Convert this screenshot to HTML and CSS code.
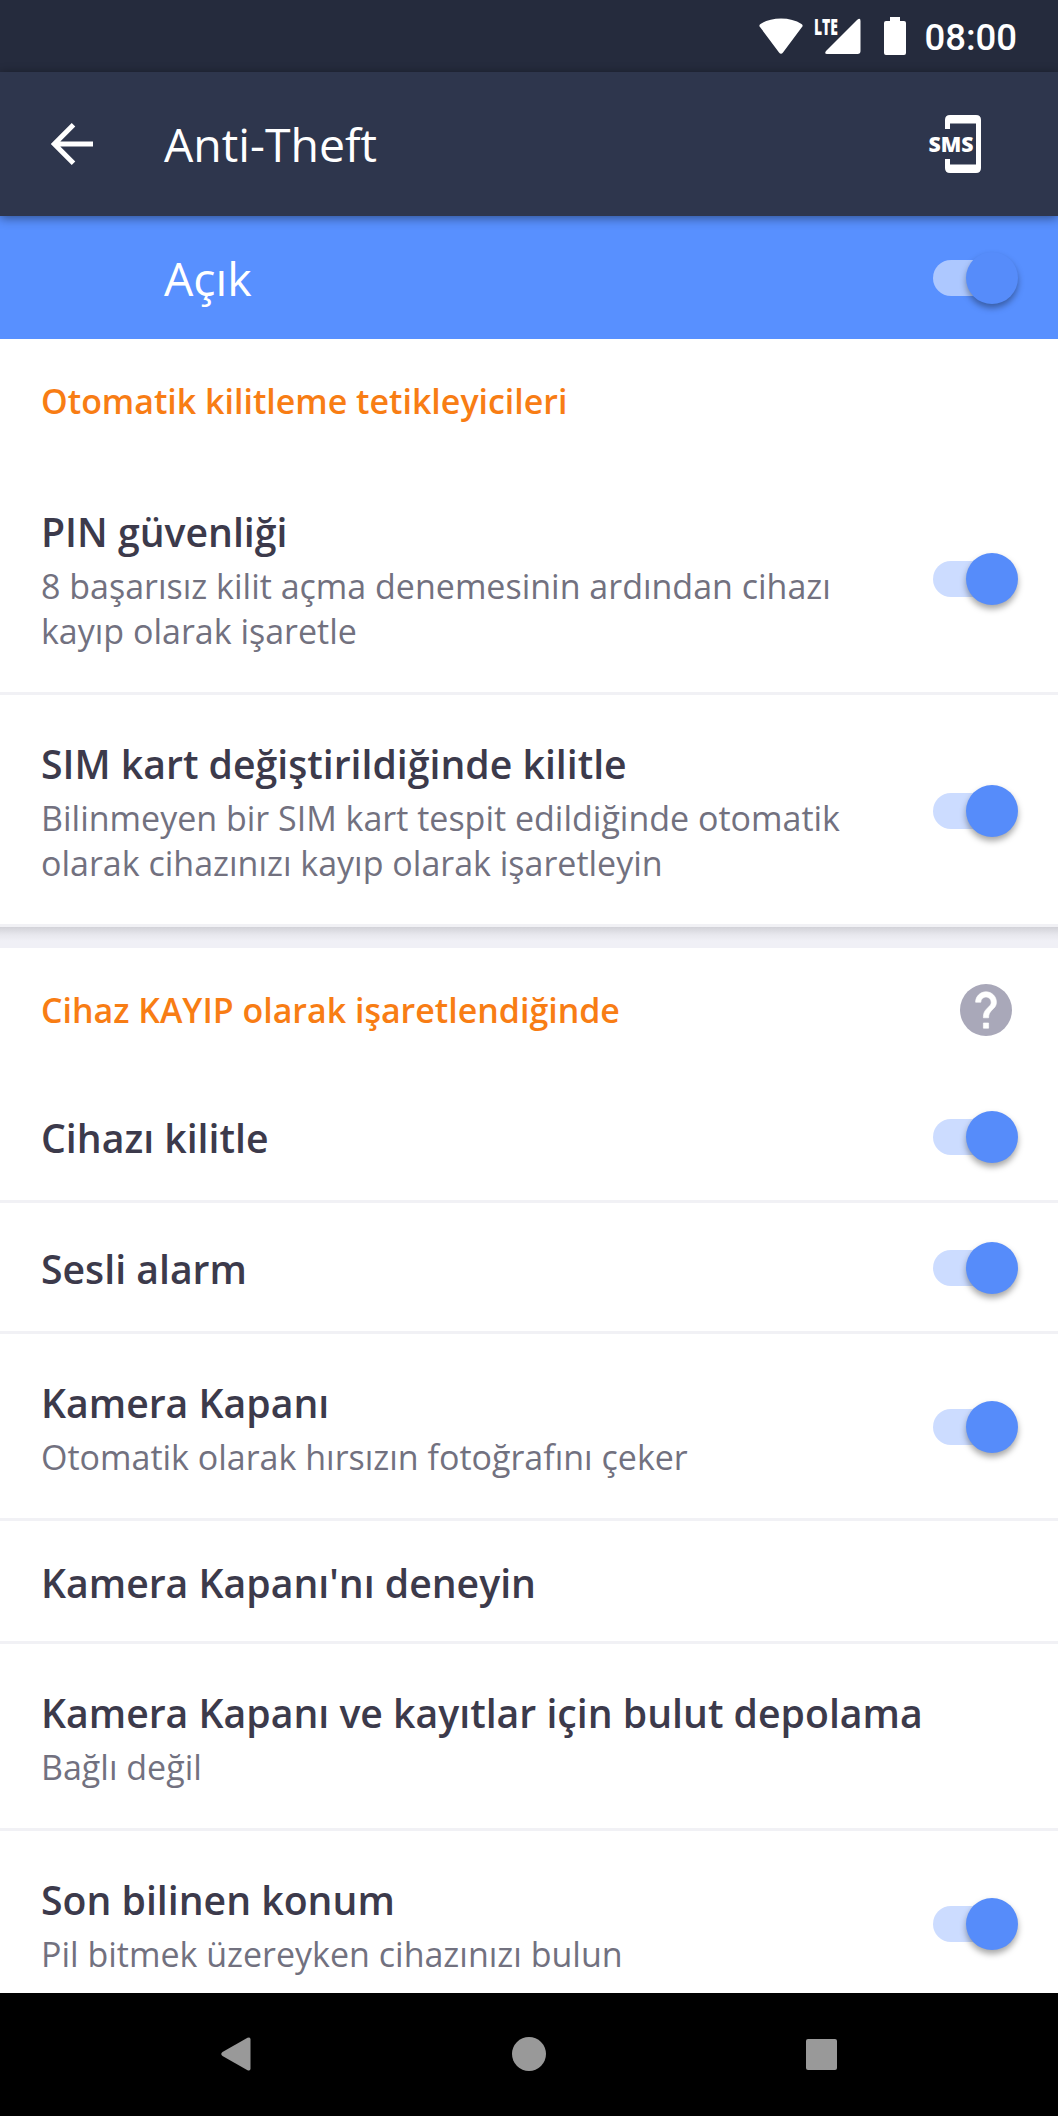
FILE: index.html
```html
<!DOCTYPE html>
<html lang="tr">
<head>
    <meta charset="UTF-8">
    <meta name="viewport" content="width=device-width, initial-scale=1.0">
    <title>Anti-Theft</title>
    <link rel="stylesheet" href="styles.css">
</head>
<body>
    <div class="screen">
        <div class="status-bar">
            <svg class="wifi" width="46" height="38" viewBox="0 0 46 38"><path d="M2 10Q0.500 8.500 2.500 7Q11 1.500 23 1.500T43.500 7Q45.500 8.500 44 10L25 35.500Q23 38 21 35.500Z" fill="#fff"/></svg>
            <svg class="signal" width="48" height="40" viewBox="0 0 48 40">
                <text x="0" y="18.500" textLength="24" lengthAdjust="spacingAndGlyphs" class="lte">LTE</text>
                <path d="M43 4Q46.500 1 46.500 5V35Q46.500 38 43.500 38H13Q10 38 12 35Z" fill="#fff"/>
            </svg>
            <svg class="battery" width="22" height="38" viewBox="0 0 22 38"><path d="M6 0H16V4H20Q22 4 22 6V36Q22 38 20 38H2Q0 38 0 36V6Q0 4 2 4H6Z" fill="#fff"/></svg>
            <span class="clock">08:00</span>
        </div>

        <header class="app-bar">
            <svg class="back" width="42" height="42" viewBox="0 0 42 42"><path d="M42 21H4M22.500 1.800L3.300 21L22.500 40.200" fill="none" stroke="#fff" stroke-width="5"/></svg>
            <h1>Anti-Theft</h1>
            <svg class="sms" width="54" height="58" viewBox="0 0 54 58">
                <path d="M16 14V5Q16 0 21 0H47Q52 0 52 5V53Q52 58 47 58H21Q16 58 16 53V44H21V49.500H47V8.500H21V14Z" fill="#fff"/>
                <text x="-0.500" y="37" textLength="45" lengthAdjust="spacingAndGlyphs" class="sms-text">SMS</text>
            </svg>
        </header>

        <div class="master">
            <span>Açık</span>
            <div class="switch"></div>
        </div>

        <main>
            <section class="group">
                <div class="group-title first"><h2>Otomatik kilitleme tetikleyicileri</h2></div>
                <div class="row pin">
                    <div class="label">
                        <h3>PIN güvenliği</h3>
                        <p>8 başarısız kilit açma denemesinin ardından cihazı kayıp olarak işaretle</p>
                    </div>
                    <div class="switch"></div>
                </div>
                <div class="row sim">
                    <div class="label">
                        <h3>SIM kart değiştirildiğinde kilitle</h3>
                        <p>Bilinmeyen bir SIM kart tespit edildiğinde otomatik olarak cihazınızı kayıp olarak işaretleyin</p>
                    </div>
                    <div class="switch"></div>
                </div>
            </section>
            <div class="gap"></div>
            <section class="group">
                <div class="group-title">
                    <h2>Cihaz KAYIP olarak işaretlendiğinde</h2>
                    <svg class="help" width="52" height="52" viewBox="2 2 20 20">
                        <circle cx="12" cy="12" r="10" fill="#a9a8b9"/>
                        <path d="M13 19h-2v-2h2v2zm2.070-7.750l-.9.920C13.450 12.900 13 13.500 13 15h-2v-.5c0-1.100.450-2.100 1.170-2.830l1.240-1.260c.370-.360.590-.860.590-1.410 0-1.100-.9-2-2-2s-2 .9-2 2H8c0-2.210 1.790-4 4-4s4 1.790 4 4c0 .880-.360 1.680-.930 2.250z" fill="#fff" stroke="#fff" stroke-width="0.250"/>
                    </svg>
                </div>
                <div class="row lock">
                    <div class="label"><h3>Cihazı kilitle</h3></div>
                    <div class="switch"></div>
                </div>
                <div class="row alarm">
                    <div class="label"><h3>Sesli alarm</h3></div>
                    <div class="switch"></div>
                </div>
                <div class="row camera">
                    <div class="label">
                        <h3>Kamera Kapanı</h3>
                        <p>Otomatik olarak hırsızın fotoğrafını çeker</p>
                    </div>
                    <div class="switch"></div>
                </div>
                <div class="row try">
                    <div class="label"><h3>Kamera Kapanı'nı deneyin</h3></div>
                </div>
                <div class="row cloud">
                    <div class="label">
                        <h3>Kamera Kapanı ve kayıtlar için bulut depolama</h3>
                        <p>Bağlı değil</p>
                    </div>
                </div>
                <div class="row location">
                    <div class="label">
                        <h3>Son bilinen konum</h3>
                        <p>Pil bitmek üzereyken cihazınızı bulun</p>
                    </div>
                    <div class="switch"></div>
                </div>
            </section>
        </main>

        <nav class="nav-bar">
            <svg width="30" height="34" viewBox="0 0 30 34"><path d="M1.500 15L26.500 0.800Q29.500 -0.500 29.500 2.500V31.500Q29.500 34.500 26.500 33.200L1.500 19Q-1 17 1.500 15Z" fill="#999"/></svg>
            <svg width="34" height="34" viewBox="0 0 34 34"><circle cx="17" cy="17" r="17" fill="#999"/></svg>
            <svg width="31" height="31" viewBox="0 0 31 31"><rect width="31" height="31" rx="2" fill="#999"/></svg>
        </nav>
    </div>
</body>
</html>
```
FILE: styles.css
```css
* { box-sizing: border-box; }
body {
    margin: 0;
    font-family: "Open Sans", "Noto Sans", sans-serif;
    background: #fff;
}
h1, h2, h3, p { margin: 0; }
svg { display: block; flex: none; overflow: visible; }
.screen {
    width: 1058px;
    height: 2116px;
    display: flex;
    flex-direction: column;
    overflow: hidden;
}
.status-bar {
    height: 72px;
    flex: none;
    display: flex;
    align-items: center;
    justify-content: flex-end;
    padding-right: 41px;
    background: #252b3d;
    color: #fff;
}
.wifi { margin-right: 10px; }
.signal { margin-right: 22px; }
.battery { margin-right: 18px; }
.lte { font: 800 23px "Open Sans", sans-serif; fill: #fff; }
.clock {
    padding-top: 2px;
    font-family: Roboto, sans-serif;
    font-weight: 500;
    font-size: 36.500px;
}
.app-bar {
    height: 144px;
    flex: none;
    display: flex;
    align-items: center;
    padding: 0 75px 0 51px;
    background: #2e364d;
    color: #fff;
    box-shadow: 0 2px 10px rgba(0,0,0,0.45);
    z-index: 1;
}
.app-bar h1 {
    flex: 1;
    margin-left: 71px;
    font-size: 46.400px;
    font-weight: 400;
}
.sms-text { font: 800 21.500px "Open Sans", sans-serif; fill: #fff; }
.master {
    height: 123px;
    flex: none;
    display: flex;
    align-items: center;
    justify-content: space-between;
    padding: 0 40px 0 164px;
    background: #5890ff;
    color: #fff;
    font-size: 46.400px;
}
.switch {
    width: 85px;
    height: 52px;
    flex: none;
    display: flex;
    align-items: center;
    justify-content: flex-end;
}
.switch::before {
    content: "";
    width: 66px;
    height: 36px;
    margin-right: -33px;
    border-radius: 18px;
    background: #ccdcff;
}
.switch::after {
    content: "";
    width: 52px;
    height: 52px;
    border-radius: 50%;
    background: #568cfa;
    box-shadow: 0 4px 6px rgba(0,0,0,0.35);
}
.master .switch::before { background: #adc8ff; }
main {
    flex: 1;
    min-height: 0;
    overflow: hidden;
}
.group-title {
    height: 125px;
    display: flex;
    align-items: center;
    justify-content: space-between;
    padding: 0 46px 2px 41px;
}
.group-title.first { height: 126px; }
.group-title h2 {
    color: #f87d14;
    font-size: 33.950px;
    font-weight: 600;
}
.row {
    display: flex;
    align-items: center;
    justify-content: space-between;
    padding: 2px 40px 0 41px;
    border-bottom: 3px solid #f1f1f5;
}
.label {
    flex: 1;
    padding-top: 2px;
}
.row h3 {
    color: #3c3a4b;
    font-size: 39.200px;
    line-height: 54px;
    font-weight: 600;
    white-space: nowrap;
}
.row p {
    width: 830px;
    margin-top: 5px;
    color: #72717f;
    font-size: 34px;
    line-height: 45.500px;
}
.row.pin, .row.lock { padding-top: 0; }
.pin { height: 230px; }
.sim { height: 232px; }
.gap {
    height: 21px;
    background: linear-gradient(#d2d2d8, #e8e8ee 8px, #f0f0f6 14px);
}
.lock { height: 130px; }
.alarm { height: 131px; }
.camera { height: 187px; }
.try { height: 123px; }
.cloud { height: 187px; }
.location { height: 187px; }
.nav-bar {
    height: 123px;
    flex: none;
    display: flex;
    align-items: center;
    justify-content: space-between;
    padding: 0 221px 1px;
    background: #000;
}
```
